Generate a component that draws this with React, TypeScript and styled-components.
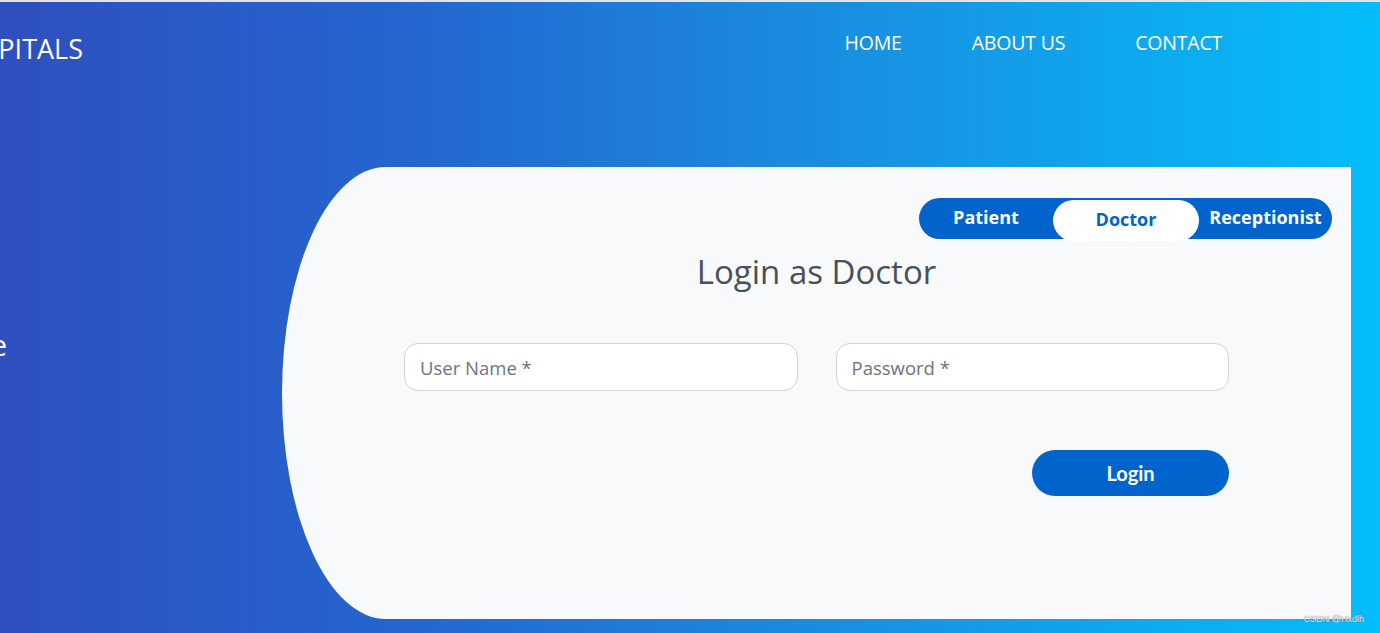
import React from "react";
import styled, { createGlobalStyle } from "styled-components";

const Global = createGlobalStyle`
  html, body { margin: 0; padding: 0; overflow: hidden; }
  body { font-family: "Open Sans", "Noto Sans", sans-serif; }
  * { box-sizing: border-box; }
`;

const Page = styled.div`
  position: relative;
  width: 1380px;
  height: 633px;
  overflow: hidden;
  border-top: 2px solid #e2e4e8;
  background: linear-gradient(to right, #2f4fbf 0%, #2466cf 30%, #1a8ee0 60%, #04bdfa 100%);
  display: flex;
  flex-direction: column;
`;

const NavBar = styled.header`
  height: 99px;
  display: flex;
  align-items: flex-start;
  justify-content: space-between;
  padding-right: 158px;
`;

const Brand = styled.div`
  width: 83px;
  margin-top: 29px;
  overflow: hidden;
  display: flex;
  justify-content: flex-end;
  white-space: nowrap;
  color: #fff;
  font-size: 27px;
  line-height: 36px;
  font-weight: 400;
`;

const NavLinks = styled.nav`
  display: flex;
  gap: 70px;
  margin-top: 27px;
`;

const NavLink = styled.a`
  color: #fff;
  font-size: 19.5px;
  line-height: 28px;
  text-decoration: none;
  letter-spacing: -0.2px;
`;

const Main = styled.main`
  margin-top: 66px;
  display: flex;
  align-items: flex-start;
`;

const LeftCol = styled.div`
  width: 282px;
  flex: none;
  padding-top: 160px;
`;

const HeroClip = styled.div`
  width: 7px;
  overflow: hidden;
  display: flex;
  justify-content: flex-end;
  white-space: nowrap;
  color: #fff;
  font-size: 30px;
  line-height: 36px;
`;

const Card = styled.section`
  width: 1069px;
  height: 452px;
  flex: none;
  background: #f8f9fb;
  border-radius: 104px 0 0 104px / 226px 0 0 226px;
  display: flex;
  flex-direction: column;
  padding: 31px 19px 0 0;
`;

const Tabs = styled.div`
  align-self: flex-end;
  display: flex;
  align-items: flex-start;
  height: 41px;
  background: #0064cc;
  border-radius: 21px;
`;

const Tab = styled.div<{ $w: number; $active?: boolean }>`
  width: ${(p) => p.$w}px;
  height: 41px;
  margin-top: ${(p) => (p.$active ? "2px" : "0")};
  display: flex;
  align-items: center;
  justify-content: center;
  border-radius: 21px;
  background: ${(p) => (p.$active ? "#fff" : "transparent")};
  color: ${(p) => (p.$active ? "#0064cc" : "#fff")};
  font-size: 18px;
  font-weight: 700;
  padding-bottom: ${(p) => (p.$active ? "4px" : "3px")};
  white-space: nowrap;
`;

const Title = styled.h1`
  margin: 11px 0 0 19px;
  text-align: center;
  font-size: 33px;
  line-height: 44px;
  font-weight: 400;
  color: #495057;
`;

const Form = styled.form`
  margin-top: 49px;
  padding: 0 103px 0 122px;
  display: flex;
  flex-direction: column;
`;

const Row = styled.div`
  display: flex;
  gap: 38px;
`;

const Input = styled.input`
  flex: 1;
  height: 48px;
  border: 1px solid #ced4da;
  border-radius: 14px;
  background: #fff;
  padding: 0 15px;
  font-family: "Open Sans", "Noto Sans", sans-serif;
  font-size: 18.5px;
  color: #495057;
  outline: none;
  &::placeholder { color: #6c757d; }
`;

const SubmitRow = styled.div`
  display: flex;
  justify-content: flex-end;
  margin-top: 59px;
`;

const LoginButton = styled.button`
  width: 197px;
  height: 46px;
  border: none;
  border-radius: 23px;
  background: #0064cc;
  color: #fff;
  font-family: Lato, "Open Sans", sans-serif;
  font-size: 20px;
  font-weight: 700;
`;

const Watermark = styled.div`
  position: absolute;
  right: 16px;
  bottom: 9px;
  font-family: "Liberation Sans", Arial, sans-serif;
  font-size: 9px;
  color: #e8eef5;
  text-shadow: 0 0 1px #556;
`;

export default function App() {
  return (
    <>
      <Global />
      <Page>
        <NavBar>
          <Brand>GLOBAL HOSPITALS</Brand>
          <NavLinks>
            <NavLink href="#">HOME</NavLink>
            <NavLink href="#">ABOUT US</NavLink>
            <NavLink href="#">CONTACT</NavLink>
          </NavLinks>
        </NavBar>
        <Main>
          <LeftCol>
            <HeroClip>Welcome</HeroClip>
          </LeftCol>
          <Card>
            <Tabs>
              <Tab $w={134}>Patient</Tab>
              <Tab $w={146} $active>Doctor</Tab>
              <Tab $w={133}>Receptionist</Tab>
            </Tabs>
            <Title>Login as Doctor</Title>
            <Form onSubmit={(e) => e.preventDefault()}>
              <Row>
                <Input placeholder="User Name *" />
                <Input type="password" placeholder="Password *" />
              </Row>
              <SubmitRow>
                <LoginButton type="submit">Login</LoginButton>
              </SubmitRow>
            </Form>
          </Card>
        </Main>
        <Watermark>CSDN @Hxdlh</Watermark>
      </Page>
    </>
  );
}
